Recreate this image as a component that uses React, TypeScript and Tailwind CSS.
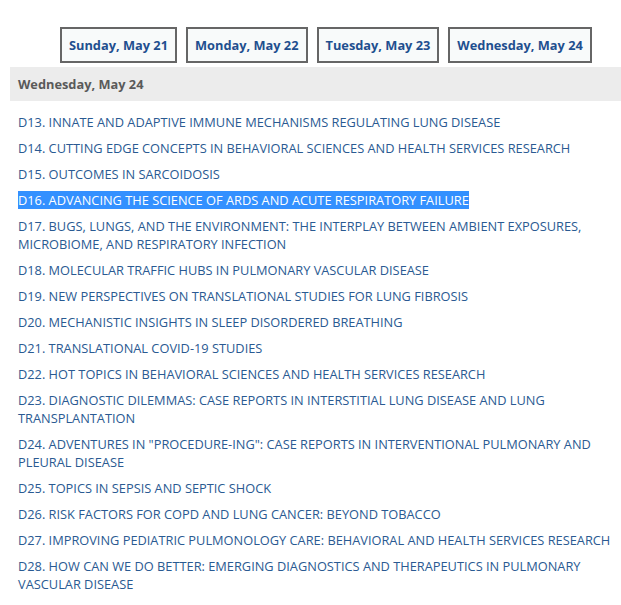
import React from "react";

const days = ["Sunday, May 21", "Monday, May 22", "Tuesday, May 23", "Wednesday, May 24"];

const sessions: { text: string; selected?: boolean }[] = [
  { text: "D13. INNATE AND ADAPTIVE IMMUNE MECHANISMS REGULATING LUNG DISEASE" },
  { text: "D14. CUTTING EDGE CONCEPTS IN BEHAVIORAL SCIENCES AND HEALTH SERVICES RESEARCH" },
  { text: "D15. OUTCOMES IN SARCOIDOSIS" },
  { text: "D16. ADVANCING THE SCIENCE OF ARDS AND ACUTE RESPIRATORY FAILURE", selected: true },
  { text: "D17. BUGS, LUNGS, AND THE ENVIRONMENT: THE INTERPLAY BETWEEN AMBIENT EXPOSURES, MICROBIOME, AND RESPIRATORY INFECTION" },
  { text: "D18. MOLECULAR TRAFFIC HUBS IN PULMONARY VASCULAR DISEASE" },
  { text: "D19. NEW PERSPECTIVES ON TRANSLATIONAL STUDIES FOR LUNG FIBROSIS" },
  { text: "D20. MECHANISTIC INSIGHTS IN SLEEP DISORDERED BREATHING" },
  { text: "D21. TRANSLATIONAL COVID-19 STUDIES" },
  { text: "D22. HOT TOPICS IN BEHAVIORAL SCIENCES AND HEALTH SERVICES RESEARCH" },
  { text: "D23. DIAGNOSTIC DILEMMAS: CASE REPORTS IN INTERSTITIAL LUNG DISEASE AND LUNG TRANSPLANTATION" },
  { text: "D24. ADVENTURES IN \"PROCEDURE-ING\": CASE REPORTS IN INTERVENTIONAL PULMONARY AND PLEURAL DISEASE" },
  { text: "D25. TOPICS IN SEPSIS AND SEPTIC SHOCK" },
  { text: "D26. RISK FACTORS FOR COPD AND LUNG CANCER: BEYOND TOBACCO" },
  { text: "D27. IMPROVING PEDIATRIC PULMONOLOGY CARE: BEHAVIORAL AND HEALTH SERVICES RESEARCH" },
  { text: "D28. HOW CAN WE DO BETTER: EMERGING DIAGNOSTICS AND THERAPEUTICS IN PULMONARY VASCULAR DISEASE" },
];

export default function App() {
  return (
    <div
      className="w-[621px] h-[605px] bg-white overflow-hidden text-[12.8px]"
      style={{ fontFamily: '"Open Sans", "Liberation Sans", sans-serif' }}
    >
      <div className="flex gap-[9px] pl-[60px] pt-[27px]">
        {days.map((d) => (
          <button
            key={d}
            className="h-[36px] px-[7px] border-2 border-[#666666] bg-[#f8fafa] text-[#1f4f8f] font-bold leading-none whitespace-nowrap"
          >
            {d}
          </button>
        ))}
      </div>
      <div className="mt-[4px] ml-[10px] h-[34px] bg-[#ececec] flex items-center pl-[8px] pt-px font-bold text-[#5a5a5a]">
        Wednesday, May 24
      </div>
      <div className="pt-[12px] pl-[18px] pr-[6px] flex flex-col gap-[8px]">
        {sessions.map((s) => (
          <div key={s.text} className="leading-[18px] text-[#2a5a92]">
            {s.selected ? (
              <span className="bg-[#3390ff] text-white">{s.text}</span>
            ) : (
              s.text
            )}
          </div>
        ))}
      </div>
    </div>
  );
}
